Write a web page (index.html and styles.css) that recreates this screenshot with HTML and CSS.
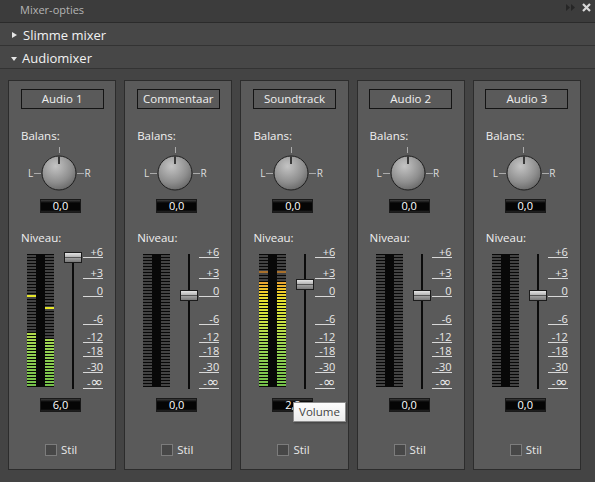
FILE: index.html
```html
<!DOCTYPE html>
<html lang="nl">
<head>
  <meta charset="UTF-8" />
  <title>Mixer-opties</title>
  <link rel="stylesheet" href="styles.css">
</head>
<body>

  <!-- Panel title -->
  <div class="titlebar">
    <span>Mixer-opties</span>
    <div class="title-icons">
      <svg width="10" height="7" viewBox="0 0 10 7"><path d="M0 0L4 3.5L0 7Z M5 0L9 3.5L5 7Z" fill="#262626"/></svg>
      <svg width="9" height="9" viewBox="0 0 9 9"><path d="M1 1L8 8M8 1L1 8" stroke="#d8d8d8" stroke-width="2.2"/></svg>
    </div>
  </div>

  <div class="section">
    <span class="arrow right"></span> Slimme mixer
  </div>
  <div class="section">
    <span class="arrow down"></span> Audiomixer
  </div>

  <!-- Channel strips -->
  <div class="mixer" id="mixer"></div>

  <div class="tooltip">Volume</div>

  <script>
    const strips = [
      { name: 'Audio 1', vol: '6,0', thumb: 3, left: 54, right: 48, peakL: 90, peakR: 78 },
      { name: 'Commentaar', vol: '0,0', thumb: 41, left: 0, right: 0 },
      { name: 'Soundtrack', vol: '2,8', thumb: 30, left: 105, right: 105, peakL: 114, peakR: 114 },
      { name: 'Audio 2', vol: '0,0', thumb: 41, left: 0, right: 0 },
      { name: 'Audio 3', vol: '0,0', thumb: 41, left: 0, right: 0 }
    ];

    // line position of each scale mark, from the top of the meter
    const scale = [
      ['+6', 3], ['+3', 24], ['0', 42], ['-6', 70],
      ['-12', 88], ['-18', 102], ['-30', 118], ['-<span class="inf">∞</span>', 134]
    ];

    function peakColor(h) {
      if (h > 108) return '#a8702c';
      if (h > 95) return '#e8b828';
      return '#e6e62a';
    }

    function column(level, peak) {
      let html = '<div class="col">';
      if (level) html += `<div class="lit" style="height:${level}px"></div>`;
      if (peak) html += `<div class="peak" style="bottom:${peak}px;background:${peakColor(peak)}"></div>`;
      return html + '</div>';
    }

    function renderStrips() {
      const container = document.getElementById('mixer');
      container.innerHTML = '';

      strips.forEach(s => {
        const strip = document.createElement('div');
        strip.className = 'strip';
        strip.innerHTML = `
          <div class="track-name">${s.name}</div>
          <div class="label balance-label">Balans:</div>
          <div class="balance">
            <span class="lr">L</span>
            <i class="tick"></i>
            <div class="knob">
              <svg width="36" height="36" viewBox="0 0 36 36">
                <defs>
                  <radialGradient id="kg" cx="0.4" cy="0.3" r="0.8">
                    <stop offset="0" stop-color="#c4c4c4"/>
                    <stop offset="0.6" stop-color="#8e8e8e"/>
                    <stop offset="1" stop-color="#5e5e5e"/>
                  </radialGradient>
                </defs>
                <circle cx="18" cy="18" r="17" fill="url(#kg)" stroke="#1e1e1e" stroke-width="1"/>
                <line x1="18" y1="1.5" x2="18" y2="9" stroke="#111" stroke-width="1.5"/>
              </svg>
            </div>
            <i class="tick"></i>
            <span class="lr">R</span>
          </div>
          <div class="value">0,0</div>
          <div class="label level-label">Niveau:</div>
          <div class="level">
            <div class="meter">${column(s.left, s.peakL)}${column(s.right, s.peakR)}</div>
            <div class="fader">
              <div class="thumb" style="top:${s.thumb - 5}px"></div>
            </div>
            <div class="scale">
              ${scale.map(m => `<div class="mark" style="top:${m[1] - 11}px">${m[0]}</div>`).join('')}
            </div>
          </div>
          <div class="value">${s.vol}</div>
          <label class="mute"><span class="box"></span>Stil</label>
        `;
        container.appendChild(strip);
      });
    }

    renderStrips();
  </script>

</body>
</html>
```

FILE: styles.css
```css
* {
  box-sizing: border-box;
}
body {
  margin: 0;
  width: 595px;
  height: 482px;
  overflow: hidden;
  background: #444;
  font-family: "Open Sans", "Noto Sans", sans-serif;
  color: #eee;
  position: relative;
}
.titlebar {
  height: 23px;
  background: #3c3c3c;
  border-bottom: 1px solid #2b2b2b;
  display: flex;
  justify-content: space-between;
  padding: 0 4px 4px 20px;
  align-items: center;
  font-size: 11px;
  color: #b4b4b4;
}
.title-icons {
  display: flex;
  align-items: center;
  gap: 6px;
  margin-bottom: 3px;
}
.section {
  height: 23px;
  background: #474747;
  border-bottom: 1px solid #333;
  display: flex;
  align-items: center;
  padding: 2px 0 0 10px;
  font-size: 13px;
  color: #f2f2f2;
  gap: 5px;
}
.arrow.right {
  display: inline-block;
  border-left: 5px solid #e6e6e6;
  border-top: 3.5px solid transparent;
  border-bottom: 3.5px solid transparent;
  width: 0;
  height: 0;
  margin: 0 1px 0 2px;
}
.arrow.down {
  display: inline-block;
  border-top: 4px solid #e6e6e6;
  border-left: 3.5px solid transparent;
  border-right: 3.5px solid transparent;
  width: 0;
  height: 0;
  margin: 2px 0 0 1px;
}
.mixer {
  display: grid;
  grid-template-columns: repeat(5, 1fr);
  gap: 8px;
  padding: 11px 14px 12px 8px;
}
.strip {
  height: 390px;
  background: #5a5a5a;
  border: 1px solid #2c2c2c;
  padding-top: 8px;
}
.track-name {
  width: 83px;
  height: 20px;
  margin: 0 auto;
  border: 1px solid #141414;
  text-align: center;
  font-size: 11.5px;
  line-height: 18px;
  color: #f0f0f0;
}
.label {
  font-size: 11.5px;
  line-height: 14px;
  padding-left: 12px;
  color: #f0f0f0;
}
.balance-label {
  margin-top: 20px;
}
.balance {
  display: flex;
  align-items: center;
  margin: 12px 0 0 18px;
  height: 36px;
}
.lr {
  font-size: 10px;
  width: 7px;
  text-align: center;
  color: #ddd;
}
.tick {
  width: 7px;
  height: 1px;
  background: #aaa;
}
.knob {
  width: 36px;
  height: 36px;
  position: relative;
}
.knob svg {
  display: block;
}
.knob::before {
  content: "";
  position: absolute;
  left: 17.5px;
  top: -8px;
  width: 1px;
  height: 6px;
  background: #aaa;
}
.value {
  width: 41px;
  height: 14px;
  margin: 8px 0 0 31px;
  background: linear-gradient(#3c3c3c, #050505 3px, #050505 10px, #262626);
  border: 1px solid #1a1a1a;
  color: #fff;
  font-size: 11px;
  line-height: 12px;
  text-align: center;
}
.level-label {
  margin-top: 18px;
}
.level {
  display: flex;
  margin: 9px 0 0 18px;
  height: 136px;
}
.meter {
  width: 27px;
  height: 133px;
  background: #080808;
  display: flex;
  justify-content: space-between;
}
.col {
  width: 9px;
  height: 100%;
  position: relative;
  background: linear-gradient(#434343 0 2px, #080808 2px 3px) 0 100% / 100% 3px;
}
.lit {
  position: absolute;
  left: 0;
  right: 0;
  bottom: 0;
  background:
    linear-gradient(transparent 0 2px, #080808 2px 3px) 0 100% / 100% 3px,
    linear-gradient(to top, #74c04a 0, #98d454 40px, #c8e044 65px, #e4e432 85px, #f0cc2a 95px, #e8a032 106px, #c05028 133px) 0 100% / 100% 133px no-repeat;
}
.peak {
  position: absolute;
  left: 0;
  right: 0;
  height: 2px;
}
.fader {
  width: 18px;
  margin-left: 10px;
  position: relative;
}
.fader::before {
  content: "";
  position: absolute;
  left: 8px;
  top: 0;
  width: 2px;
  height: 135px;
  background: #0c0c0c;
}
.thumb {
  position: absolute;
  left: 0;
  width: 18px;
  height: 11px;
  border: 1px solid #1c1c1c;
  background: linear-gradient(#e4e4e4, #b4b4b4 4px, #555 4px, #555 5px, #a0a0a0 5px, #7a7a7a);
}
.scale {
  width: 20px;
  margin-left: 1px;
  position: relative;
}
.mark {
  position: absolute;
  right: 0;
  width: 20px;
  height: 12px;
  border-bottom: 1px solid #d8d8d8;
  font-size: 11px;
  line-height: 11px;
  text-align: right;
  color: #e8e8e8;
  white-space: nowrap;
}
.inf {
  font-family: "DejaVu Sans", sans-serif;
  font-size: 15px;
  line-height: 11px;
}
.mute {
  display: flex;
  align-items: center;
  gap: 4px;
  margin: 30px 0 0 36px;
  font-size: 11.5px;
  color: #e8e8e8;
}
.box {
  width: 12px;
  height: 12px;
  background: #474747;
  border: 1px solid #7c7c7c;
}
.tooltip {
  position: absolute;
  left: 293px;
  top: 402px;
  width: 53px;
  height: 20px;
  background: linear-gradient(#fdfdfd, #ececec);
  border: 1px solid #8c8c8c;
  box-shadow: 1px 1px 2px rgba(0,0,0,0.3);
  color: #444;
  font-size: 11.5px;
  line-height: 18px;
  text-align: center;
}
```
